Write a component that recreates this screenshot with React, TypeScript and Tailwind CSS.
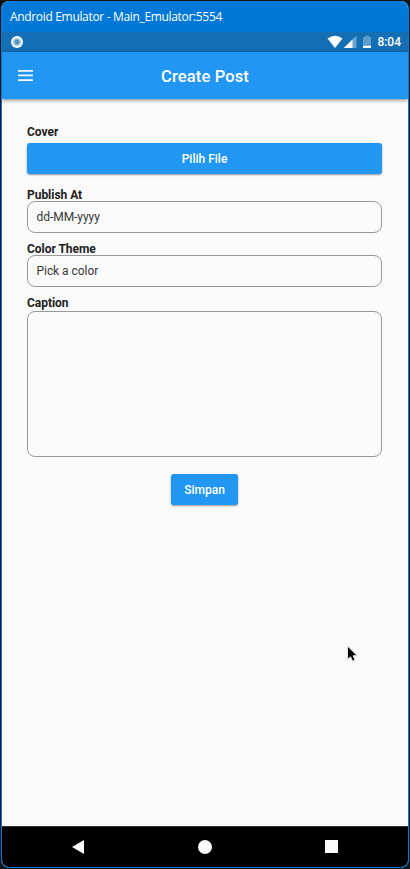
import type { ReactNode } from "react";

function TitleBar() {
  return (
    <div className="flex h-[31px] shrink-0 items-center bg-[#0078d7] pl-2 text-white">
      <span className="pt-px font-['Open_Sans',sans-serif] text-[12px] leading-4 tracking-[-0.33px] whitespace-nowrap">
        Android Emulator - Main_Emulator:5554
      </span>
    </div>
  );
}

function StatusBar() {
  return (
    <div className="flex h-5 shrink-0 items-center bg-[#146fb5] pr-[7px] pl-[9px] text-white">
      <svg width="12" height="12" viewBox="0 0 12 12">
        <circle cx="6" cy="6" r="6" fill="#fafafa" />
        <circle cx="6" cy="6" r="4" fill="#a9cbe4" />
        <circle cx="6" cy="6" r="2.5" fill="#5193c6" />
      </svg>
      <svg className="ml-auto" width="44" height="14" viewBox="0 0 44 14">
        <path d="M.5 3.4Q8-1.8 15.5 3.4L8 13Z" fill="#fafafa" />
        <path d="M29.5 .5V13H16.8Z" fill="#6aa4d1" />
        <path d="M25.5 4.4V13H16.8Z" fill="#fafafa" />
        <path d="M36 2H38V.8H42V2H44V13H36Z" fill="#5d9dcd" />
        <path d="M36 10.8H44V13H36Z" fill="#fafafa" />
      </svg>
      <span className="ml-[6px] text-[12px] leading-5 font-medium">8:04</span>
    </div>
  );
}

function AppBar() {
  return (
    <div className="z-10 grid h-[47px] shrink-0 grid-cols-[60px_1fr_60px] items-center bg-[#2196f3] text-white shadow-[0_1px_4px_rgba(0,0,0,0.5)]">
      <svg className="ml-4" width="15" height="11" viewBox="0 0 15 11" fill="#f4faff">
        <path d="M0 0H15V1.7H0ZM0 4.6H15V6.3H0ZM0 9.2H15V10.9H0Z" />
      </svg>
      <h1 className="pt-[2px] text-center text-[16.5px] leading-6 font-medium tracking-[0.15px]">Create Post</h1>
    </div>
  );
}

function Label({ children }: { children: ReactNode }) {
  return <label className="block h-[14px] text-[12px] leading-[14px] font-bold tracking-[-0.03px] text-[#212121]">{children}</label>;
}

function Field({ children }: { children: ReactNode }) {
  return (
    <div className="flex h-8 items-center rounded-[8px] border border-[#999] pl-[8.5px] text-[12px] tracking-[-0.05px] text-[#383838]">
      {children}
    </div>
  );
}

function NavBar() {
  return (
    <div className="grid h-[41px] shrink-0 grid-cols-3 items-center border-t border-[#333] bg-black px-[14px] pb-px">
      <svg className="mr-auto ml-[56px]" width="12" height="14" viewBox="0 0 12 14">
        <path d="M12 0V14L0 7Z" fill="#fafafa" />
      </svg>
      <div className="mx-auto size-[14px] rounded-full bg-[#fafafa]" />
      <div className="mx-auto size-[13px] bg-[#fafafa]" />
    </div>
  );
}

function Cursor() {
  return (
    <svg className="absolute top-[645px] left-[346px]" width="13" height="18" viewBox="0 0 13 18">
      <path
        d="M1.5 1V14.5L4.6 11.8L6.6 16.2L9 15.2L7.1 10.7H11.2Z"
        fill="#000"
        stroke="#e3e3e3"
        strokeWidth="1"
      />
    </svg>
  );
}

export default function App() {
  return (
    <div className="relative h-[869px] w-[410px] bg-[#141414] p-px font-[Roboto,sans-serif]">
      <div className="flex h-[867px] w-[408px] flex-col overflow-hidden rounded-[8px] border border-t-0 border-[#0078d7] bg-[#fafafa]">
        <TitleBar />
        <StatusBar />
        <AppBar />
        <main className="flex flex-1 flex-col pt-[26px] pr-[26px] pl-[25px]">
          <Label>Cover</Label>
          <button className="mt-1 h-[31px] rounded-[3px] bg-[#2196f3] text-[12px] font-medium text-white shadow-[0_1px_2px_rgba(0,0,0,0.4)]">
            Pilih File
          </button>
          <div className="mt-[14px]">
            <Label>Publish At</Label>
            <div className="-mt-px">
              <Field>dd-MM-yyyy</Field>
            </div>
          </div>
          <div className="mt-[9px]">
            <Label>Color Theme</Label>
            <div className="-mt-px">
              <Field>Pick a color</Field>
            </div>
          </div>
          <div className="mt-[9px]">
            <Label>Caption</Label>
            <div className="mt-px h-[146px] rounded-[8px] border border-[#999]" />
          </div>
          <button className="mt-[17px] h-[31px] w-[67px] self-center rounded-[3px] bg-[#2196f3] text-[12px] font-medium text-white shadow-[0_1px_2px_rgba(0,0,0,0.4)]">
            Simpan
          </button>
        </main>
        <NavBar />
      </div>
      <Cursor />
    </div>
  );
}
